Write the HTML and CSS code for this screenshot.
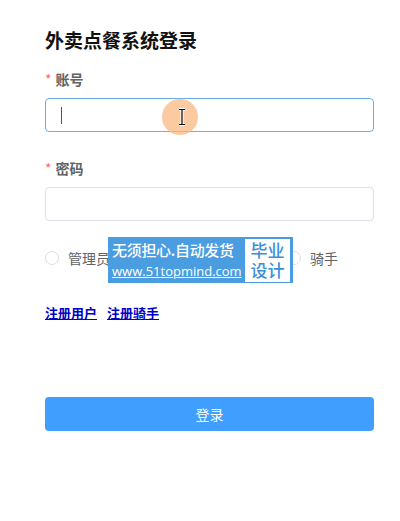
FILE: index.html
```html
<!DOCTYPE html>
<html lang="zh-CN">

<head>
    <meta charset="utf-8">
    <meta name="viewport" content="width=device-width, initial-scale=1.0">
    <title>外卖点餐系统登录</title>
    <link rel="icon" href="data:,">
    <link rel="stylesheet" href="styles.css">
</head>

<body>
    <div class="login">
        <h1>外卖点餐系统登录</h1>
        <form class="form">
            <label class="label" for="account"><span class="star">*</span>账号</label>
            <div class="input focus" id="account"><span class="caret"></span></div>
            <label class="label second" for="password"><span class="star">*</span>密码</label>
            <div class="input" id="password"></div>
            <div class="radios">
                <span class="radio"><i></i>管理员</span>
                <span class="radio"><i></i>用户</span>
                <span class="radio"><i></i>商家</span>
                <span class="radio"><i></i>骑手</span>
            </div>
            <div class="links">
                <a href="#">注册用户</a>
                <a href="#">注册骑手</a>
            </div>
            <button type="button" class="submit">登录</button>
        </form>
    </div>

    <div class="pointer">
        <svg width="10" height="18" viewBox="0 0 10 18">
            <path d="M2 1.5h6M5 1.5v15M2 16.5h6" stroke="#fff" stroke-width="3" fill="none" />
            <path d="M2 1.5h6M5 1.5v15M2 16.5h6" stroke="#000" stroke-width="1.2" fill="none" />
        </svg>
    </div>

    <div class="stamp">
        <div class="stamp-text">
            <span class="stamp-line">无须担心.自动发货</span>
            <span class="stamp-url">www.51topmind.com</span>
        </div>
        <div class="stamp-box">毕业<br>设计</div>
    </div>
</body>

</html>
```

FILE: styles.css
```css
body {
    margin: 0;
    font-family: "Noto Sans CJK SC", "Noto Sans", sans-serif;
    background: #fff;
    color: #606266;
}

.login {
    padding: 27px 26px 0 45px;
}

.login h1 {
    color: #111;
    font-size: 19px;
    line-height: 26px;
    margin: 0;
}

.form {
    display: flex;
    flex-direction: column;
}

.label {
    display: block;
    font-size: 14px;
    font-weight: bold;
    line-height: 20px;
    margin: 16px 0 9px;
}

.label.second {
    margin-top: 26px;
}

.star {
    color: #f56c6c;
    font-weight: normal;
    margin-right: 4px;
}

.input {
    border: 1px solid #dcdfe6;
    border-radius: 4px;
    box-sizing: border-box;
    height: 34px;
    padding: 8px 15px;
}

.input.focus {
    border-color: #6aaee6;
}

.caret {
    border-left: 1px solid #555;
    display: block;
    height: 17px;
}

.radios {
    display: flex;
    gap: 25px;
    font-size: 14px;
    line-height: 20px;
    margin-top: 27px;
}

.radio {
    align-items: center;
    display: flex;
}

.radio i {
    border: 1px solid #dcdfe6;
    border-radius: 50%;
    box-sizing: border-box;
    height: 14px;
    margin-right: 9px;
    width: 14px;
}

.links {
    display: flex;
    gap: 10px;
    font-size: 13px;
    font-weight: bold;
    line-height: 20px;
    margin-top: 35px;
}

.links a {
    color: #0000c8;
}

.submit {
    background: #409eff;
    border: 0;
    border-radius: 4px;
    color: #fff;
    font-family: inherit;
    font-size: 14px;
    height: 34px;
    margin-top: 74px;
}

.pointer {
    align-items: center;
    background: rgba(251, 184, 128, 0.75);
    border-radius: 50%;
    display: flex;
    height: 36px;
    justify-content: center;
    left: 162px;
    position: absolute;
    top: 99px;
    width: 36px;
}

.pointer svg {
    margin-left: 4px;
}

.stamp {
    background: #4a9de0;
    box-sizing: border-box;
    display: flex;
    gap: 2px;
    height: 46px;
    left: 108px;
    padding: 2px 3px 1px 4px;
    position: absolute;
    top: 237px;
    width: 185px;
}

.stamp-text {
    color: #fff;
    display: flex;
    flex: none;
    flex-direction: column;
    justify-content: space-around;
    width: 131px;
}

.stamp-line {
    font-size: 15px;
    font-weight: 500;
    letter-spacing: -0.3px;
    line-height: 20px;
    white-space: nowrap;
}

.stamp-url {
    font-family: "Open Sans", sans-serif;
    font-size: 13px;
    line-height: 19px;
    text-decoration: underline;
    white-space: nowrap;
}

.stamp-box {
    background: #fff;
    color: #3b8fd8;
    flex: 1;
    font-size: 17px;
    font-weight: 500;
    line-height: 20px;
    text-align: center;
    padding-top: 1px;
}
```
